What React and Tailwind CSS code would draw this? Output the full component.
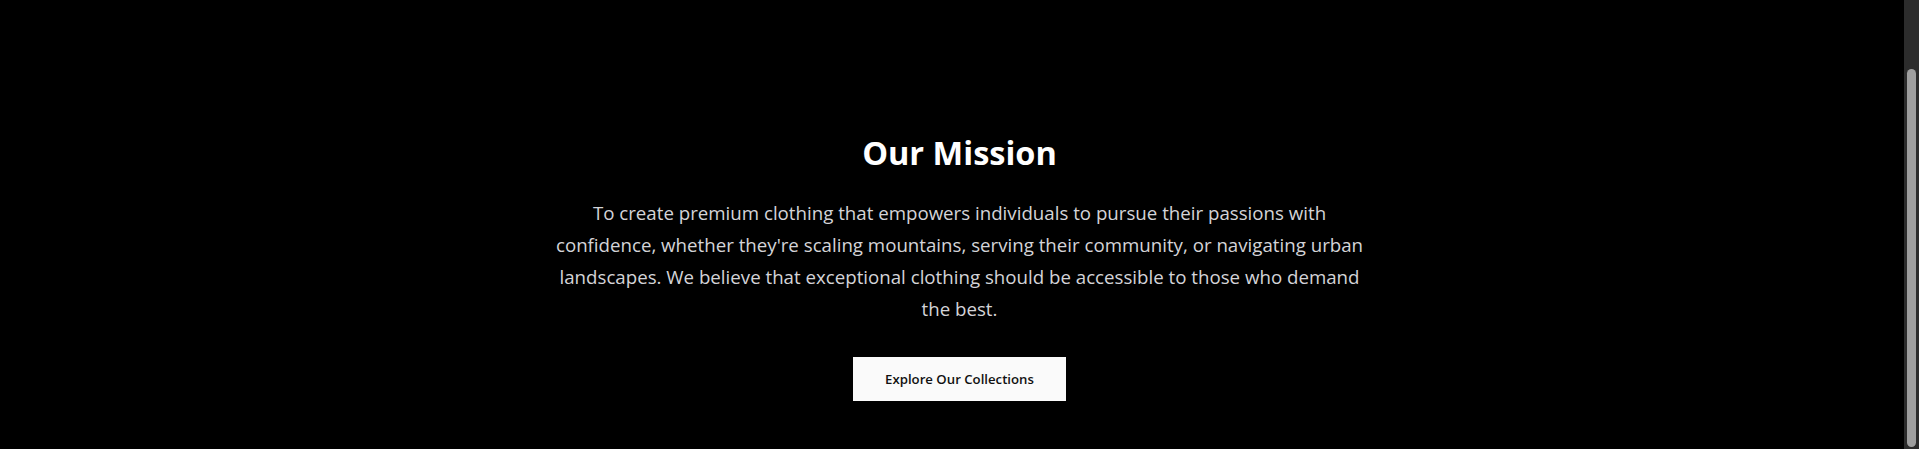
import React from "react";

// Mission section with the page's overlay scrollbar
export default function App() {
    return (
        <div className="relative h-[449px] w-full overflow-hidden bg-black font-['Open_Sans',sans-serif]">
            <section className="flex flex-col items-center pt-[133px] text-center">
                <h2 className="text-[32.5px] leading-[40px] font-bold text-white">
                    Our Mission
                </h2>
                <p className="mt-6 w-[830px] text-[18.7px] leading-8 text-[#d4d4d8]">
                    To create premium clothing that empowers individuals to pursue their passions with
                    confidence, whether they're scaling mountains, serving their community, or navigating urban
                    landscapes. We believe that exceptional clothing should be accessible to those who demand
                    the best.
                </p>
                <button className="mt-8 bg-[#fafafa] px-8 py-3 text-[13.2px] leading-5 font-semibold text-[#111111]">
                    Explore Our Collections
                </button>
            </section>

            {/* scrollbar */}
            <div className="absolute top-0 right-0 flex h-full w-[15px] flex-col bg-[#2c2c2c] px-[3px] pt-[69px] pb-[2px]">
                <div className="flex-1 rounded-full bg-[#9f9f9f]" />
            </div>
        </div>
    );
}
